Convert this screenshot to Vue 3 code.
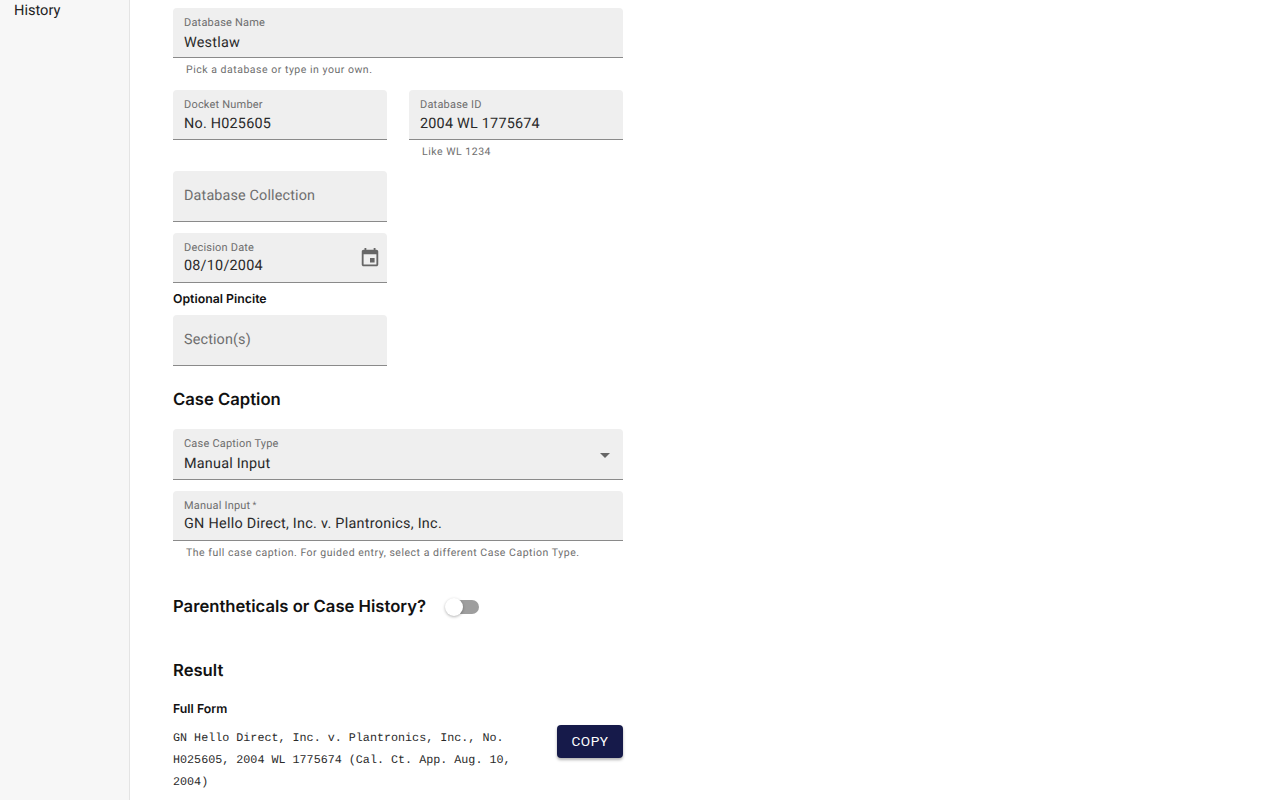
<script setup>
const iconCal = 'M17 12h-5v5h5v-5zM16 1v2H8V1H6v2H5c-1.11 0-1.99.9-1.99 2L3 19c0 1.1.89 2 2 2h14c1.1 0 2-.9 2-2V5c0-1.1-.9-2-2-2h-1V1h-2zm3 18H5V8h14v11z'
</script>

<template>
  <div class="page">
    <aside class="side"><div class="nav-item">History</div></aside>
    <main class="main">
      <div class="field wide f-name">
        <span class="label">Database Name</span>
        <span class="value">Westlaw</span>
      </div>
      <p class="help">Pick a database or type in your own.</p>

      <div class="row">
        <div class="field half f-short">
          <span class="label">Docket Number</span>
          <span class="value">No. H025605</span>
        </div>
        <div class="field half f-short">
          <span class="label">Database ID</span>
          <span class="value">2004 WL 1775674</span>
        </div>
      </div>
      <p class="help help-right">Like WL 1234</p>

      <div class="field half empty collection">
        <span class="placeholder">Database Collection</span>
      </div>

      <div class="field half f-short date">
        <span class="label">Decision Date</span>
        <span class="value">08/10/2004</span>
        <svg class="cal" viewBox="0 0 24 24" width="22" height="22"><path :d="iconCal" fill="#666" /></svg>
      </div>

      <h4 class="sub pincite">Optional Pincite</h4>
      <div class="field half empty">
        <span class="placeholder">Section(s)</span>
      </div>

      <h3 class="head caption">Case Caption</h3>
      <div class="field wide select">
        <span class="label">Case Caption Type</span>
        <span class="value">Manual Input</span>
        <span class="arrow"></span>
      </div>
      <div class="field wide f-short manual">
        <span class="label">Manual Input<span class="star">*</span></span>
        <span class="value">GN Hello Direct, Inc. v. Plantronics, Inc.</span>
      </div>
      <p class="help">The full case caption. For guided entry, select a different Case Caption Type.</p>

      <div class="toggle-row">
        <h3 class="head">Parentheticals or Case History?</h3>
        <span class="switch"><span class="track"></span><span class="thumb"></span></span>
      </div>

      <h3 class="head result">Result</h3>
      <h4 class="sub full">Full Form</h4>
      <div class="output">
        <p class="mono">GN Hello Direct, Inc. v. Plantronics, Inc., No. H025605, 2004 WL 1775674 (Cal. Ct. App. Aug. 10, 2004)</p>
        <button class="copy">COPY</button>
      </div>
    </main>
  </div>
</template>

<style>
html, body { margin: 0; background: #fff; overflow: hidden; }
</style>

<style scoped>
.page { display: flex; height: 800px; overflow: hidden; font-family: Roboto, sans-serif; color: #1a1a1a; text-rendering: geometricPrecision; }
.side { width: 129px; flex: none; background: #f7f7f7; border-right: 1px solid #e4e4e4; }
.nav-item { padding: 1px 0 0 14px; font-size: 14.6px; line-height: 18px; color: #222; }
.main { padding: 8px 0 0 43px; width: 450px; display: flex; flex-direction: column; align-items: flex-start; }
.field { position: relative; box-sizing: border-box; background: #efefef; border-radius: 4px 4px 0 0; border-bottom: 1px solid #8a8a8a; padding: 0 11px; flex: none; }
.wide { width: 450px; }
.half { width: 214px; }
.f-name { height: 50px; padding-top: 9px; }
.f-short { height: 50px; padding-top: 9px; }
.select { height: 51px; padding-top: 9px; }
.label { display: block; font-size: 11px; line-height: 12px; letter-spacing: 0.2px; color: #6e6e6e; white-space: nowrap; }
.value { display: block; font-size: 14.4px; line-height: 18px; letter-spacing: 0.22px; color: #2a2a2a; white-space: nowrap; }
.f-name .value { margin-top: 5px; }
.f-short .value { margin-top: 4px; }
.date .value { margin-top: 3px; }
.select .value { margin-top: 5px; }
.manual .value { margin-top: 3px; letter-spacing: 0.27px; }
.star { font-size: 9px; margin-left: 2px; vertical-align: 1px; }
.empty { height: 51px; padding-top: 16px; }
.placeholder { display: block; font-size: 14.4px; line-height: 18px; letter-spacing: 0.14px; color: #6e6e6e; }
.help { margin: 6px 0 0 13px; font-size: 10.5px; line-height: 12px; letter-spacing: 0.52px; color: #6e6e6e; height: 14px; white-space: nowrap; }
.row { display: flex; gap: 22px; margin-top: 12px; }
.help-right { margin-left: 249px; }
.collection { margin-top: 11px; }
.date { margin-top: 11px; }
.cal { position: absolute; right: 6px; top: 14px; }
.sub { margin: 0; font-family: Inter, sans-serif; font-weight: 600; font-size: 12.3px; line-height: 14px; color: #111; }
.pincite { margin: 9px 0 9px; }
.head { margin: 0; font-family: Inter, sans-serif; font-weight: 600; font-size: 16.65px; line-height: 20px; color: #111; white-space: nowrap; }
.caption { margin: 24px 0 19px; }
.arrow { position: absolute; right: 13px; top: 24px; width: 0; height: 0; border-left: 5px solid transparent; border-right: 5px solid transparent; border-top: 5px solid #666; }
.manual { margin-top: 11px; }
.toggle-row { display: flex; align-items: center; gap: 19px; margin-top: 36px; }
.switch { position: relative; display: block; width: 34px; height: 20px; }
.track { position: absolute; left: 2px; top: 3px; width: 32px; height: 14px; border-radius: 7px; background: #9e9e9e; }
.thumb { position: absolute; left: 0; top: 1px; width: 18px; height: 18px; border-radius: 50%; background: #fff; box-shadow: 0 1px 3px rgba(0,0,0,.3); }
.result { margin-top: 44px; }
.full { margin-top: 21px; }
.output { width: 450px; display: flex; justify-content: space-between; align-items: flex-start; margin-top: 8px; }
.mono { margin: 4px 0 0; width: 345px; font-family: "Liberation Mono", monospace; font-size: 11.72px; line-height: 21.75px; color: #2a2a2a; }
.copy { box-sizing: border-box; width: 66px; height: 33px; margin-top: 1px; border: 0; border-radius: 4px; background: #161a4a; color: #fff; font-family: Roboto, sans-serif; font-size: 13.6px; letter-spacing: 0.55px; box-shadow: 0 2px 3px rgba(0,0,0,.3); padding: 0 0 2px; }
</style>
